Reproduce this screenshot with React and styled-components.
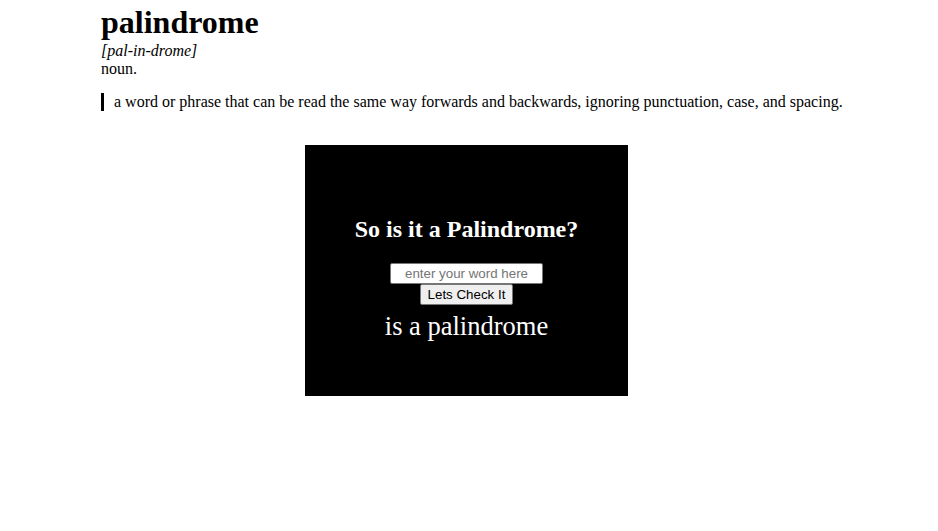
import React, { useState } from "react";
import styled, { createGlobalStyle } from "styled-components";

const GlobalStyle = createGlobalStyle`
  body {
    margin: 0;
    font-family: "Liberation Serif", "Times New Roman", serif;
    color: #000;
    background: #fff;
  }
`;

const Page = styled.div`
  padding: 0 101px;
`;

const Word = styled.h1`
  font-size: 32px;
  font-weight: bold;
  margin: 0;
  padding-top: 4px;
  line-height: 37px;
`;

const Phonetic = styled.div`
  font-style: italic;
  font-size: 16px;
  line-height: 18px;
  margin-top: 1px;
`;

const Kind = styled.div`
  font-size: 16px;
  line-height: 18px;
`;

const Definition = styled.blockquote`
  margin: 15px 0 0;
  padding-left: 10px;
  border-left: 3px solid #000;
  font-size: 16px;
  line-height: 18px;
  white-space: nowrap;
`;

const Checker = styled.section`
  width: 323px;
  height: 251px;
  margin: 34px 0 0 204px;
  background: #000;
  color: #fff;
  display: flex;
  flex-direction: column;
  align-items: center;
  box-sizing: border-box;
  padding-top: 70px;
`;

const Question = styled.h2`
  font-size: 24px;
  font-weight: bold;
  margin: 0 0 20px;
  line-height: 28px;
`;

const WordInput = styled.input`
  width: 153px;
  height: 21px;
  box-sizing: border-box;
  font-family: "Liberation Sans", Arial, sans-serif;
  font-size: 13.33px;
  text-align: center;
  border: 1px solid #767676;
  border-radius: 2px;
  padding: 1px 2px;
  background: #fff;
  &::placeholder {
    color: #757575;
  }
`;

const CheckButton = styled.button`
  height: 21px;
  box-sizing: border-box;
  font-family: "Liberation Sans", Arial, sans-serif;
  font-size: 13.33px;
  padding: 1px 7px;
  background: #efefef;
  color: #000;
  border: 1px solid #767676;
  border-radius: 2px;
`;

const Result = styled.p`
  font-size: 26.5px;
  margin: 6px 0 0;
  line-height: 30px;
`;

export default function App() {
  const [word, setWord] = useState("");
  return (
    <Page>
      <GlobalStyle />
      <Word>palindrome</Word>
      <Phonetic>[pal-in-drome]</Phonetic>
      <Kind>noun.</Kind>
      <Definition>
        a word or phrase that can be read the same way forwards and backwards, ignoring punctuation, case, and spacing.
      </Definition>
      <Checker>
        <Question>So is it a Palindrome?</Question>
        <WordInput
          placeholder="enter your word here"
          value={word}
          onChange={e => setWord(e.target.value)}
        />
        <CheckButton>Lets Check It</CheckButton>
        <Result>is a palindrome</Result>
      </Checker>
    </Page>
  );
}
